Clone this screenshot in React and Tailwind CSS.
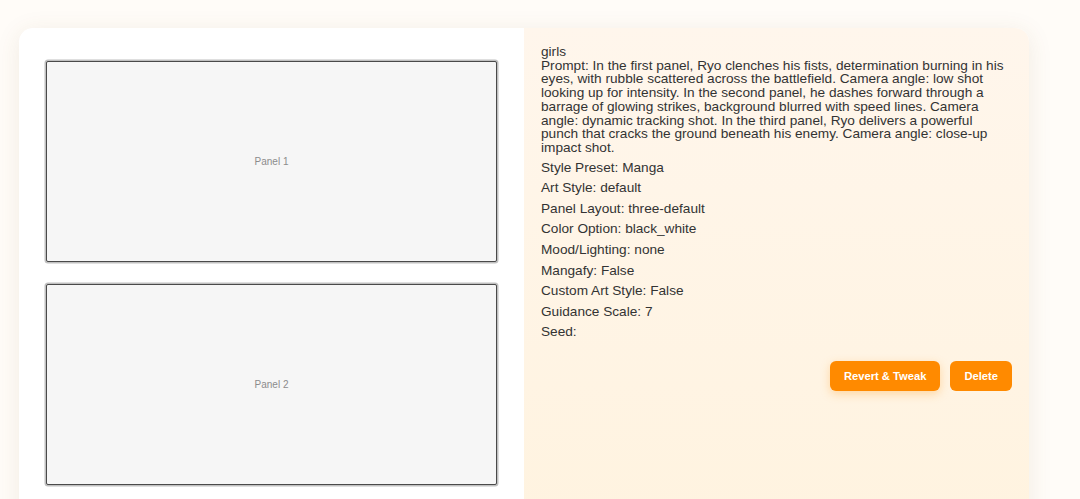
export default function App() {
  const details = [
    ["Style Preset", "Manga"],
    ["Art Style", "default"],
    ["Panel Layout", "three-default"],
    ["Color Option", "black_white"],
    ["Mood/Lighting", "none"],
    ["Mangafy", "False"],
    ["Custom Art Style", "False"],
    ["Guidance Scale", "7"],
    ["Seed", ""],
  ];

  return (
    <div
      className="min-h-[499px] h-[499px] overflow-hidden bg-[#fffcf8] pt-[28px] pl-[19px]"
      style={{ fontFamily: '"Liberation Sans", Arial, sans-serif' }}
    >
      <div className="w-[1010px] h-[520px] grid grid-cols-2 rounded-[14px] bg-white shadow-[0_4px_24px_rgba(120,90,40,0.10)] overflow-hidden">
        {/* panels */}
        <div className="px-[27px] pt-[33px] flex flex-col gap-[22px]">
          {["Panel 1", "Panel 2"].map((p) => (
            <div
              key={p}
              className="h-[201px] rounded-[2px] border-[1.5px] border-[#4a4a4a] bg-[#f6f6f6] shadow-[0_0_0_1.5px_#c0c0c0] flex items-center justify-center"
            >
              <span className="text-[10px] text-[#8c8c8c]">{p}</span>
            </div>
          ))}
        </div>

        {/* details */}
        <div className="bg-gradient-to-b from-[#fff6ec] to-[#fff3df] pl-[17px] pr-[17px] pt-[17px] text-[13.65px] text-[#333]">
          <p className="leading-[13.7px] mb-[5px] pr-[6px]">
            girls
            <br />
            Prompt: In the first panel, Ryo clenches his fists, determination
            burning in his eyes, with rubble scattered across the battlefield.
            Camera angle: low shot looking up for intensity. In the second
            panel, he dashes forward through a barrage of glowing strikes,
            background blurred with speed lines. Camera angle: dynamic tracking
            shot. In the third panel, Ryo delivers a powerful punch that cracks
            the ground beneath his enemy. Camera angle: close-up impact shot.
          </p>
          {details.map(([k, v]) => (
            <p key={k} className="leading-[15.6px] my-[5px]">
              {k}: {v}
            </p>
          ))}
          <div className="mt-[21px] flex justify-end gap-[10px]">
            <button className="h-[30px] px-[14px] rounded-[6px] bg-[#ff8a00] text-white text-[11.2px] font-bold shadow-[0_3px_10px_rgba(255,160,40,0.35)]">
              Revert &amp; Tweak
            </button>
            <button className="h-[30px] px-[14px] rounded-[6px] bg-[#ff8a00] text-white text-[11.2px] font-bold">
              Delete
            </button>
          </div>
        </div>
      </div>
    </div>
  );
}
